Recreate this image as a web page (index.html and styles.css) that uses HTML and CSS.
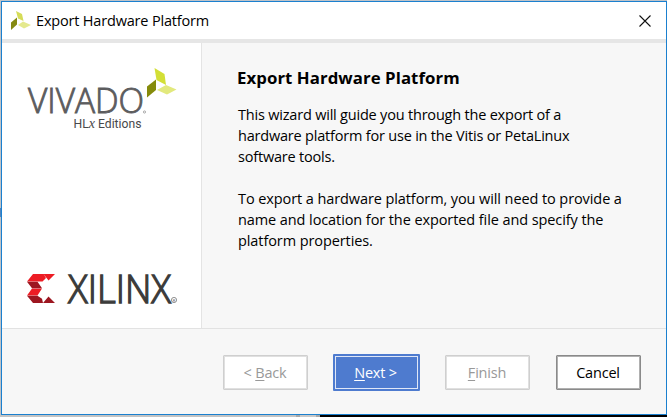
FILE: index.html
```html
<!DOCTYPE html>
<html lang="en">
<head>
<meta charset="utf-8">
<title>Export Hardware Platform</title>
<link rel="stylesheet" href="styles.css">
</head>
<body>
<main class="dialog">
  <header class="titlebar">
    <svg class="app-icon" width="20" height="20" viewBox="0 0 20 20">
      <path fill="#d5dc58" d="M5 0l6 3 1.500 7L7 7.500z"/>
      <path fill="#858a12" d="M0 11.500l6-5v7l-6 5.500z"/>
      <path fill="#e4e98e" d="M7 14l5-3.500 8 3.500-7 3.500z"/>
    </svg>
    <span class="caption">Export Hardware Platform</span>
    <svg class="close" width="12" height="12" viewBox="0 0 12 12"><path d="M.5.5l11 11M11.5.5l-11 11" stroke="#111" stroke-width="1.1"/></svg>
  </header>
  <section class="content">
    <aside class="brand">
      <svg class="vivado" width="155" height="66" viewBox="0 0 155 66">
        <text class="vivado-name" x="1" y="45" textLength="116" lengthAdjust="spacingAndGlyphs">VIVADO</text>
        <circle cx="117.500" cy="44" r="1.100" fill="none" stroke="#777" stroke-width=".6"/>
        <path fill="#d3df36" d="M127.500 0l10 6 1.500 11-9.500-5z"/>
        <path fill="#858b0b" d="M120 18.500l9-7v10.500l-9 7.500z"/>
        <path fill="#e2e97d" d="M130 22l9-5 10.500 4.500-9.500 5z"/>
        <text class="edition" x="46.500" y="59.500" textLength="68" lengthAdjust="spacingAndGlyphs">HL<tspan class="x">x</tspan> Editions</text>
      </svg>
      <svg class="xilinx" width="155" height="34" viewBox="0 0 155 34">
        <path fill="#ed1c24" d="M6 1h10.500l2.500 4-3.500 3.500H0zM16.500 1H28l-6.500 6.500zM5 15.500h10l-4.500 7H0z"/>
        <path fill="#9d1620" d="M0 8.700h10.500l4.500 6.600H5zM0 22.800h10.500l4.500 3 1 4.200H6zM21.500 23.500l6.500 6.500H16z"/>
        <text class="xilinx-name" x="41" y="30" textLength="103" lengthAdjust="spacingAndGlyphs">XILINX</text>
        <circle cx="147" cy="27" r="2.600" fill="none" stroke="#777" stroke-width=".8"/>
        <text class="registered" x="145.700" y="28.500">R</text>
      </svg>
    </aside>
    <article class="intro">
      <h1>Export Hardware Platform</h1>
      <p>This wizard will guide you through the export of a<br>hardware platform for use in the Vitis or PetaLinux<br>software tools.</p>
      <p class="details">To export a hardware platform, you will need to provide a<br>name and location for the exported file and specify the<br>platform properties.</p>
    </article>
  </section>
  <footer class="actions">
    <button class="btn" disabled>&lt; <u>B</u>ack</button>
    <button class="btn primary"><u>N</u>ext &gt;</button>
    <button class="btn" disabled><u>F</u>inish</button>
    <button class="btn cancel">Cancel</button>
  </footer>
</main>
</body>
</html>
```
FILE: styles.css
```css
* { box-sizing: border-box; }
body {
  margin: 0;
  width: 667px;
  height: 417px;
  padding: 1px 0 0 1px;
  overflow: hidden;
  font-family: "Open Sans", "Noto Sans", sans-serif;
  font-size: 14.5px;
  color: #000;
  background:
    linear-gradient(#4f86c0, #4f86c0) 0 208px / 1px 9px no-repeat,
    linear-gradient(90deg, #c4c4c4 296px, #a9a9a9 296px 300px, #c9c9c9 300px 316px, #a9a9a9 316px 320px, #000 320px) 0 415px / 667px 2px no-repeat,
    #bfc3c8;
}
.dialog {
  display: flex;
  flex-direction: column;
  width: 666px;
  height: 414px;
  border: 1px solid #1b80cf;
  background: #f7f7f7;
}
.titlebar {
  display: flex;
  align-items: center;
  height: 41px;
  padding: 0 15px 0 9px;
  border-bottom: 4px solid #e6e6e6;
  background: #fff;
}
.caption { margin-left: 5px; letter-spacing: -.18px; }
.close { margin-left: auto; }
.content { display: flex; height: 286px; border-bottom: 1px solid #e2e2e2; }
.brand {
  display: flex;
  flex-direction: column;
  justify-content: space-between;
  width: 200px;
  padding: 25px 0 21px 25px;
  border-right: 1px solid #e4e4e4;
  background: #fff;
}
.brand svg { display: block; overflow: visible; }
.vivado-name { font: 300 35px "Open Sans", sans-serif; fill: #5c5c5e; stroke: #5c5c5e; stroke-width: .9; }
.edition { font: 13px Roboto, sans-serif; fill: #48484a; }
.x { font: italic 15px "Liberation Serif", serif; }
.xilinx-name { font: 300 39px "Open Sans", sans-serif; fill: #3b3b3a; stroke: #3b3b3a; stroke-width: 1.3; }
.registered { font: 4px Roboto, sans-serif; fill: #666; }
.intro { padding: 23px 0 0 35px; line-height: 21px; white-space: nowrap; }
h1 { margin: 0 0 15px; font-size: 16.800px; line-height: 23px; font-weight: 700; letter-spacing: .07px; }
p { margin: 0 0 21px; padding-left: 1px; letter-spacing: -.2px; }
.details { letter-spacing: -.09px; }
.actions { display: flex; align-items: center; height: 85px; padding: 1px 0 0 221px; }
.btn {
  width: 85px;
  height: 35px;
  margin: 0 25px 0 0;
  padding: 0 1px 0 0;
  border: 1px solid #cfcfcf;
  border-radius: 1px;
  box-shadow: inset 0 0 0 1px #e0e0e0;
  background: #fff;
  color: #999;
  font: inherit;
  letter-spacing: -.2px;
}
.btn u { text-decoration-thickness: 1px; text-underline-offset: 2px; }
.primary {
  width: 87px;
  height: 37px;
  padding-right: 2px;
  border: 2px solid #4e7bcf;
  box-shadow: inset 0 0 0 1px #dfe7f7;
  background: #4e7bcf;
  color: #fff;
}
.cancel { margin: 0 0 0 1px; border-color: #8a8a8a; box-shadow: inset 0 0 0 1px #b0b0b0; color: #000; }
```
